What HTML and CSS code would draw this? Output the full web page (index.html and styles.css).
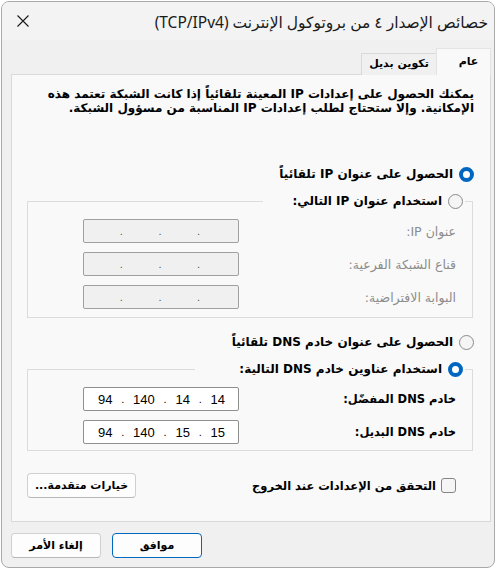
FILE: index.html
```html
<!DOCTYPE html>
<html lang="ar">
<head>
  <meta charset="UTF-8" />
  <title>خصائص الإصدار ٤ من بروتوكول الإنترنت (TCP/IPv4)</title>
  <link rel="stylesheet" href="styles.css">
</head>
<body>
  <div class="window" dir="rtl">
    <div class="titlebar">
      <span class="title">خصائص الإصدار ٤ من بروتوكول الإنترنت (TCP/IPv4)</span>
      <span class="close">
        <svg width="12" height="12" viewBox="0 0 12 12"><path d="M0.5 0.5 L11.5 11.5 M11.5 0.5 L0.5 11.5" stroke="#1a1a1a" stroke-width="1.1" fill="none"/></svg>
      </span>
    </div>

    <div class="content">
      <div class="tabs">
        <div class="tab active">عام</div>
        <div class="tab">تكوين بديل</div>
      </div>

      <div class="panel">
        <p class="intro">يمكنك الحصول على إعدادات IP المعينة تلقائياً إذا كانت الشبكة تعتمد هذه<br>الإمكانية. وإلا ستحتاج لطلب إعدادات IP المناسبة من مسؤول الشبكة.</p>

        <div class="option first"><span class="radio on"></span>الحصول على عنوان IP تلقائياً</div>

        <fieldset class="group">
          <legend class="legend-ip"><span class="radio"></span>استخدام عنوان IP التالي:</legend>
          <div class="row disabled">
            <span class="label">عنوان IP:</span>
            <span class="ipbox"><i>.</i><i>.</i><i>.</i></span>
          </div>
          <div class="row disabled">
            <span class="label">قناع الشبكة الفرعية:</span>
            <span class="ipbox"><i>.</i><i>.</i><i>.</i></span>
          </div>
          <div class="row disabled">
            <span class="label">البوابة الافتراضية:</span>
            <span class="ipbox"><i>.</i><i>.</i><i>.</i></span>
          </div>
        </fieldset>

        <div class="option"><span class="radio"></span>الحصول على عنوان خادم DNS تلقائياً</div>

        <fieldset class="group dns">
          <legend class="legend-dns"><span class="radio on"></span>استخدام عناوين خادم DNS التالية:</legend>
          <div class="row">
            <span class="label">خادم DNS المفضّل:</span>
            <span class="ipbox filled"><b>94</b><i>.</i><b>140</b><i>.</i><b>14</b><i>.</i><b>14</b></span>
          </div>
          <div class="row">
            <span class="label">خادم DNS البديل:</span>
            <span class="ipbox filled"><b>94</b><i>.</i><b>140</b><i>.</i><b>15</b><i>.</i><b>15</b></span>
          </div>
        </fieldset>

        <div class="bottom-row">
          <div class="check-label"><span class="checkbox"></span>التحقق من الإعدادات عند الخروج</div>
          <button class="btn advanced">خيارات متقدمة...</button>
        </div>
      </div>

      <div class="footer">
        <button class="btn default">موافق</button>
        <button class="btn">إلغاء الأمر</button>
      </div>
    </div>
  </div>
</body>
</html>
```

FILE: styles.css
```css
* {
  box-sizing: border-box;
}
body {
  margin: 0;
  background: #fff;
  font-family: "DejaVu Sans", sans-serif;
  font-size: 11px;
  color: #000;
}
.window {
  width: 494px;
  height: 567px;
  margin: 1px 0 0 1px;
  background: #f0f0f0;
  border: 1px solid #a9a9a9;
  border-radius: 8px;
  overflow: hidden;
}
.titlebar {
  height: 38px;
  display: flex;
  align-items: center;
  justify-content: space-between;
  padding: 0 6px 0 15px;
  background: #f3f3f3;
}
.title {
  font-family: "Noto Sans", "DejaVu Sans", sans-serif;
  font-size: 15.5px;
  color: #1a1a1a;
  padding-top: 1px;
  white-space: nowrap;
}
.close {
  display: flex;
}
.content {
  padding: 8px 3px 0 9px;
}
.tabs {
  display: flex;
  align-items: flex-end;
  height: 27px;
  position: relative;
  z-index: 1;
  margin-bottom: -1px;
}
.tab {
  font-weight: bold;
  text-align: center;
  white-space: nowrap;
  height: 22px;
  line-height: 20px;
  padding: 0 4px;
  border: 1px solid #d9d9d9;
  border-bottom: none;
  background: #f0f0f0;
}
.tab.active {
  width: 55px;
  height: 27px;
  line-height: 26px;
  background: #f9f9f9;
  border-color: #e3e3e3;
  padding-left: 14px;
}
.tab + .tab {
  width: 75px;
  border-right: none;
}
.panel {
  background: #f9f9f9;
  border: 1px solid #d9d9d9;
  height: 448px;
  padding: 12px 16px 0 15px;
}
.intro {
  margin: 0;
  font-size: 12px;
  font-weight: bold;
  line-height: 14px;
  white-space: nowrap;
}
.option {
  display: flex;
  align-items: center;
  height: 20px;
  font-size: 12px;
  font-weight: bold;
  margin-top: 14px;
}
.option.first {
  margin-top: 49px;
}
.radio {
  display: inline-block;
  width: 15px;
  height: 15px;
  border: 1px solid #8a8a8a;
  border-radius: 50%;
  background: #f5f5f5;
  margin-left: 6px;
  flex: none;
}
.radio.on {
  border: 4px solid #0067c0;
  background: #fff;
}
.group {
  margin: 7px 1px 0 0;
  width: 446px;
  border: 1px solid #dcdcdc;
  padding: 8px 16px 8px 55px;
}
.group legend {
  display: flex;
  align-items: center;
  height: 20px;
  font-size: 12px;
  font-weight: bold;
  padding: 0 2px;
  margin-right: -9px;
}
.legend-ip {
  width: 202px;
}
.legend-dns {
  width: 270px;
}
.row {
  display: flex;
  align-items: center;
  justify-content: space-between;
  height: 24px;
}
.row + .row {
  margin-top: 9px;
}
.row .label {
  font-size: 11.5px;
  font-weight: bold;
}
.row.disabled .label {
  font-size: 12.5px;
  font-weight: normal;
  color: #8c8c8c;
}
.ipbox {
  width: 156px;
  height: 24px;
  direction: ltr;
  display: flex;
  align-items: center;
  justify-content: space-around;
  padding: 0 20px 0 18px;
  border: 1px solid #a0a0a0;
  border-radius: 2px;
  background: #f0f0f0;
  font-family: "Liberation Sans", sans-serif;
  font-size: 13px;
}
.ipbox i {
  font-style: normal;
  color: #555;
  font-size: 11px;
}
.ipbox.filled {
  background: #fff;
  border-color: #8f8f8f;
  justify-content: space-between;
  padding: 0 13px 0 14px;
}
.ipbox b {
  font-weight: normal;
  color: #000;
}
.ipbox.filled i {
  color: #000;
}
.group.dns {
  padding-bottom: 6px;
}
.bottom-row {
  display: flex;
  align-items: center;
  justify-content: space-between;
  margin-top: 22px;
  padding-right: 18px;
}
.check-label {
  display: flex;
  align-items: center;
  font-size: 11.5px;
  font-weight: bold;
}
.checkbox {
  width: 15px;
  height: 15px;
  border: 1px solid #858585;
  border-radius: 3px;
  background: #f5f5f5;
  margin-left: 5px;
}
.btn {
  font-family: "DejaVu Sans", sans-serif;
  font-size: 11px;
  font-weight: bold;
  height: 25px;
  background: #fdfdfd;
  border: 1px solid #d0d0d0;
  border-bottom-color: #b8b8b8;
  border-radius: 4px;
  color: #000;
  padding: 0;
}
.advanced {
  width: 109px;
}
.footer {
  display: flex;
  justify-content: flex-end;
  gap: 11px;
  margin-top: 11px;
}
.footer .btn {
  width: 90px;
}
.btn.default {
  border: 1px solid #0067c0;
}
```
